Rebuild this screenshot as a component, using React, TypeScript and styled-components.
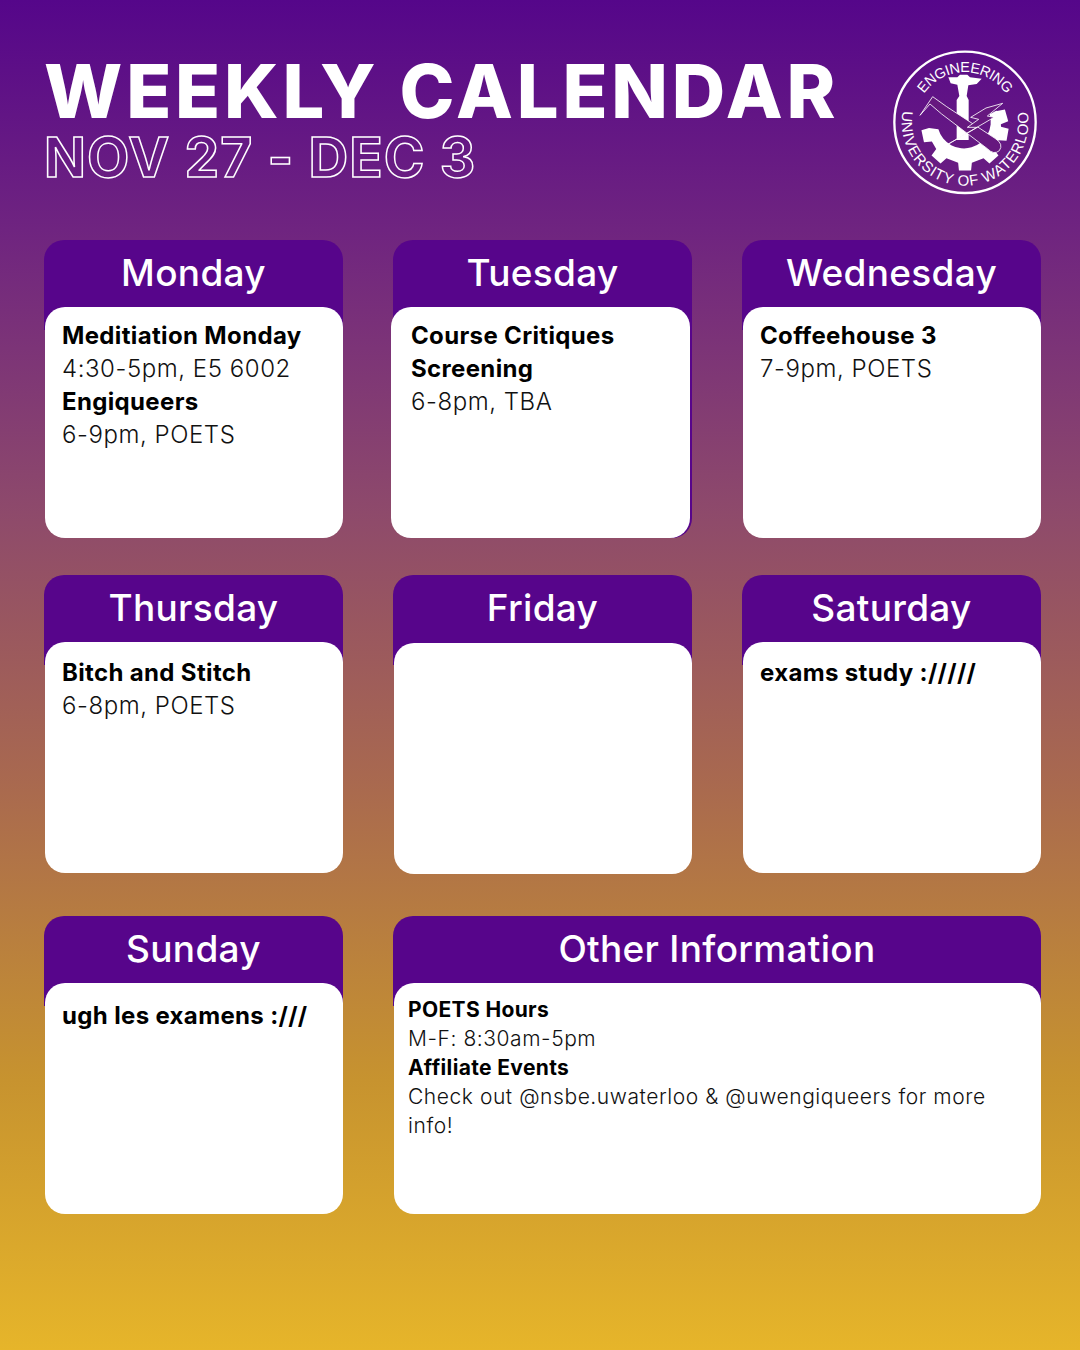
import styled, { createGlobalStyle } from "styled-components";

interface IEntry {
  title?: string;
  lines: string[];
}

const GlobalStyle = createGlobalStyle`
  html, body {
    margin: 0;
    padding: 0;
  }
  body {
    font-family: "Inter", "Liberation Sans", sans-serif;
  }
`;

// gear band with teeth, angles in degrees going clockwise from the right
const gearPath = () => {
  const cx = 255;
  const cy = 262;
  const pt = (r: number, a: number) => {
    const rad = (a * Math.PI) / 180;
    return `${(cx + r * Math.cos(rad)).toFixed(1)} ${(cy + r * Math.sin(rad)).toFixed(1)}`;
  };
  const teeth = [-16, 10, 48, 90, 132, 168];
  let d = `M ${pt(84, -28)} L ${pt(106, -28)}`;
  teeth.forEach((a) => {
    d += ` L ${pt(108, a - 11)} L ${pt(131, a - 8)} L ${pt(131, a + 8)} L ${pt(108, a + 11)}`;
  });
  d += ` L ${pt(80, 176)}`;
  d += ` A 80 80 0 0 0 ${pt(84, -28)} Z`;
  return d;
};

const Logo = () => (
  <LogoSvg viewBox="0 0 510 495" aria-label="Engineering logo">
    <circle cx="255" cy="247" r="212" fill="none" stroke="#fff" strokeWidth="7" />
    <defs>
      <path id="topArc" d="M 255 397 A 150 150 0 1 1 255 97 A 150 150 0 1 1 255 397" />
      <path id="bottomArc" d="M 255 57 A 190 190 0 1 0 255 437 A 190 190 0 1 0 255 57" />
    </defs>
    <LogoText fontSize="43" letterSpacing="-1">
      <textPath href="#topArc" startOffset="50%" textAnchor="middle">ENGINEERING</textPath>
    </LogoText>
    <LogoText fontSize="45" letterSpacing="2.6">
      <textPath href="#bottomArc" startOffset="50%" textAnchor="middle">UNIVERSITY OF WATERLOO</textPath>
    </LogoText>
    <path fill="#fff" d={gearPath()} />
    <path
      fill="#fff"
      d="M 205 112 L 232 112 L 240 104 L 262 104 L 270 112 L 305 116 L 290 132 L 265 136 L 260 168 L 266 180 L 266 300 L 230 300 L 230 180 L 238 168 L 232 134 L 212 130 Z"
    />
    <g fill="#66187f" stroke="#fff" strokeWidth="2.5" strokeLinejoin="round">
      <path d="M 120 226 L 158 170 L 200 200 L 345 295 Q 372 312 358 332 Q 342 346 322 326 L 185 222 L 150 192 Z" />
      <path d="M 188 322 L 292 262 L 262 262 L 296 238 L 272 232 L 318 204 L 368 190 L 322 228 L 342 232 Z" />
    </g>
  </LogoSvg>
);

const DayCard = ({
  day,
  entries,
  wide,
  $shift,
  $lower,
  $top,
}: {
  day: string;
  entries: IEntry[];
  wide?: boolean;
  $shift?: boolean;
  $lower?: boolean;
  $top: number;
}) => (
  <Card $wide={wide} $solid={$shift}>
    <CardHead>{day}</CardHead>
    <CardBody $wide={wide} $shift={$shift} $lower={$lower} $top={$top}>
      {entries.map((entry, i) => (
        <div key={i}>
          {entry.title && <EventTitle $wide={wide}>{entry.title}</EventTitle>}
          {entry.lines.map((line) => (
            <EventLine key={line} $wide={wide}>
              {line}
            </EventLine>
          ))}
        </div>
      ))}
    </CardBody>
  </Card>
);

const App = () => {
  return (
    <Page>
      <GlobalStyle />
      <Header>
        <div>
          <Title>WEEKLY CALENDAR</Title>
          <SubTitle>NOV 27 - DEC 3</SubTitle>
        </div>
        <Logo />
      </Header>
      <Row $gapBelow={37}>
        <DayCard
          day="Monday"
          $top={12}
          entries={[
            { title: "Meditiation Monday", lines: ["4:30-5pm, E5 6002"] },
            { title: "Engiqueers", lines: ["6-9pm, POETS"] },
          ]}
        />
        <DayCard
          day="Tuesday"
          $top={12}
          $shift
          entries={[{ title: "Course Critiques Screening", lines: ["6-8pm, TBA"] }]}
        />
        <DayCard
          day="Wednesday"
          $top={12}
          entries={[{ title: "Coffeehouse 3", lines: ["7-9pm, POETS"] }]}
        />
      </Row>
      <Row $gapBelow={43}>
        <DayCard
          day="Thursday"
          $top={14}
          entries={[{ title: "Bitch and Stitch", lines: ["6-8pm, POETS"] }]}
        />
        <DayCard day="Friday" $top={14} $lower entries={[]} />
        <DayCard
          day="Saturday"
          $top={14}
          entries={[{ title: "exams study ://///", lines: [] }]}
        />
      </Row>
      <Row $gapBelow={0}>
        <DayCard
          day="Sunday"
          $top={16}
          entries={[{ title: "ugh les examens :///", lines: [] }]}
        />
        <DayCard
          day="Other Information"
          wide
          $top={12}
          entries={[
            { title: "POETS Hours", lines: ["M-F: 8:30am-5pm"] },
            {
              title: "Affiliate Events",
              lines: ["Check out @nsbe.uwaterloo & @uwengiqueers for more info!"],
            },
          ]}
        />
      </Row>
    </Page>
  );
};

export default App;

const Page = styled.div`
  box-sizing: border-box;
  width: 1080px;
  height: 1350px;
  padding: 52px 30px 0 44px;
  overflow: hidden;
  background: linear-gradient(180deg, #55068a 0%, #6f2480 17%, #8e4a6b 38%, #a9694f 58%, #c7932f 80%, #e6b52a 100%);
`;

const Header = styled.header`
  display: flex;
  justify-content: space-between;
  align-items: flex-start;
  height: 188px;
`;

const Title = styled.h1`
  margin: 2px 0 0;
  font-size: 74px;
  line-height: 74px;
  font-weight: 800;
  color: #fff;
  letter-spacing: 3.8px;
  white-space: nowrap;
`;

const SubTitle = styled.div`
  font-size: 55px;
  line-height: 58px;
  font-weight: 700;
  color: transparent;
  -webkit-text-stroke: 1.5px #fff;
  letter-spacing: 1.1px;
  white-space: nowrap;
`;

const LogoSvg = styled.svg`
  display: block;
  flex: none;
  width: 170px;
  height: 165px;
  margin: -12px 0 0 0;
`;

const LogoText = styled.text`
  fill: #fff;
  font-family: "Liberation Sans", sans-serif;
`;

const Row = styled.section<{ $gapBelow: number }>`
  display: grid;
  grid-template-columns: repeat(3, 299px);
  column-gap: 50px;
  margin-bottom: ${({ $gapBelow }) => $gapBelow}px;
`;

const Card = styled.article<{ $wide?: boolean; $solid?: boolean }>`
  display: flex;
  flex-direction: column;
  height: 298px;
  border-radius: 20px;
  background: ${({ $solid }) =>
    $solid ? "#57058b" : "linear-gradient(#57058b 90px, transparent 90px)"};
  grid-column: ${({ $wide }) => ($wide ? "span 2" : "auto")};
`;

const CardHead = styled.h2`
  flex: none;
  margin: 0;
  height: 67px;
  font-size: 37px;
  line-height: 66px;
  font-weight: 500;
  letter-spacing: 0.3px;
  text-align: center;
  color: #fff;
`;

const CardBody = styled.div<{ $wide?: boolean; $shift?: boolean; $lower?: boolean; $top: number }>`
  flex: 1;
  box-sizing: border-box;
  padding: ${({ $top }) => $top}px 20px 0 ${({ $wide, $shift }) => ($wide ? 14 : $shift ? 20 : 17)}px;
  border-radius: 20px;
  background: #fff;
  margin: ${({ $shift, $lower }) =>
    $shift ? "0 2px 0 -2px" : $lower ? "1px 0 -1px 1px" : "0 0 0 1px"};
`;

const EventTitle = styled.div<{ $wide?: boolean }>`
  font-size: ${({ $wide }) => ($wide ? "21px" : "24px")};
  line-height: ${({ $wide }) => ($wide ? "29px" : "33px")};
  font-weight: 700;
  letter-spacing: 0.35px;
  color: #000;
`;

const EventLine = styled.div<{ $wide?: boolean }>`
  font-size: ${({ $wide }) => ($wide ? "21px" : "24px")};
  line-height: ${({ $wide }) => ($wide ? "29px" : "33px")};
  font-weight: 300;
  letter-spacing: 0.56px;
  color: #111;
`;
